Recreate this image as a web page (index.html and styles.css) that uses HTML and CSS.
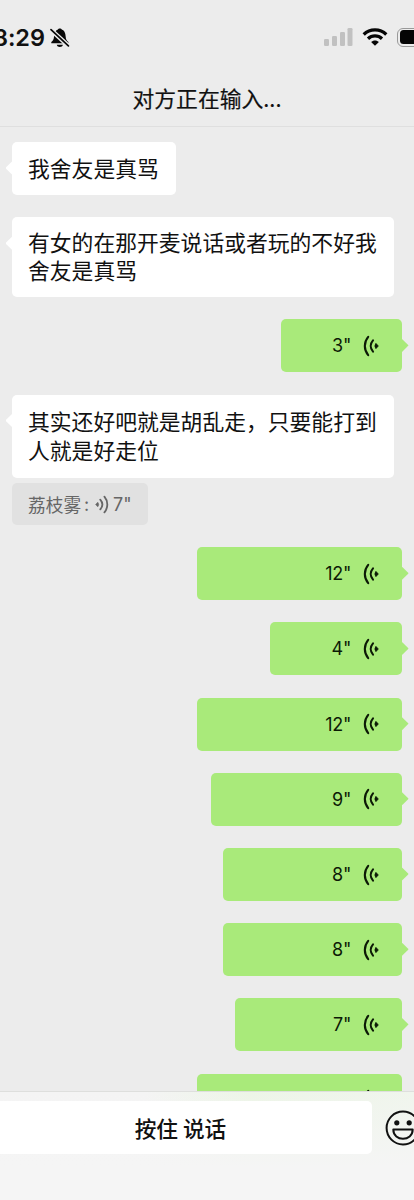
FILE: index.html
```html
<!DOCTYPE html>
<html lang="zh-CN">
<head>
<meta charset="utf-8">
<title>对方正在输入...</title>
<link rel="stylesheet" href="styles.css">
</head>
<body>
<svg width="0" height="0" class="defs">
  <symbol id="voice" viewBox="0 0 16 22">
    <path d="M5.2 1.9C.7 7.2.7 14.8 5.2 20.1M10 5.4c-3 3.4-3 7.8 0 11.2" fill="none" stroke="currentColor" stroke-width="2.1" stroke-linecap="round"/>
    <path d="M12.9 8.3 15.4 11l-2.5 2.7Q10.7 11 12.9 8.3Z" fill="currentColor" stroke="currentColor" stroke-width=".6" stroke-linejoin="round"/>
  </symbol>
</svg>
<div class="screen">
  <header class="header">
    <div class="status">
      <div class="status-left">
        <span class="time">8:29</span>
        <svg class="bell" width="20" height="20" viewBox="0 0 20 20">
          <path d="M1.3 15.2V14c1.8-1.5 2.5-2.7 2.7-5.3C4.300 4.500 5.800 2.100 8 1.500 8.300.2 11.300.2 11.700 1.500c2.300.7 3.800 3 4 7.200.1 2.600.9 3.800 2.700 5.300v1.200ZM6.800 16.800h6.100c-.4 3-5.700 3-6.100 0Z"/>
          <path class="bell-gap" d="M.5 1.500 18.700 18.200"/>
          <path class="bell-slash" d="M1 1.600 18.400 17.900"/>
        </svg>
      </div>
      <div class="status-right">
        <svg width="29" height="18" viewBox="0 0 29 18" fill="#c1c1c1"><rect y="11" width="5" height="7" rx="1.300"/><rect x="8" y="8" width="5" height="10" rx="1.300"/><rect x="16" y="4" width="5" height="14" rx="1.300"/><rect x="23.500" width="5" height="18" rx="1.300"/></svg>
        <svg class="wifi" width="26" height="18" viewBox="0 0 26 18"><path d="M1.700 6.500C8 .4 18 .4 24.300 6.500M6 10.700c4-3.700 10-3.700 14 0" fill="none" stroke="#050505" stroke-width="3.300"/><path d="M13 17.800 9.100 14.100c2-2.100 5.800-2.100 7.800 0Z" fill="#050505"/></svg>
        <div class="battery"><div class="battery-fill"></div></div>
      </div>
    </div>
    <h1 class="title">对方正在输入...</h1>
  </header>
  <main class="chat">
    <div class="bubble in one">我舍友是真骂</div>
    <div class="bubble in two tight">有女的在那开麦说话或者玩的不好我<br>舍友是真骂</div>
    <div class="bubble out s3"><span>3"</span><svg class="voice"><use href="#voice"/></svg></div>
    <div class="group">
      <div class="bubble in two loose">其实还好吧就是胡乱走，只要能打到<br>人就是好走位</div>
      <div class="quote"><span class="quote-name">荔枝雾</span><span class="colon">:</span><svg class="voice small"><use href="#voice"/></svg><span>7"</span></div>
    </div>
    <div class="bubble out s12"><span>12"</span><svg class="voice"><use href="#voice"/></svg></div>
    <div class="bubble out s4"><span>4"</span><svg class="voice"><use href="#voice"/></svg></div>
    <div class="bubble out s12"><span>12"</span><svg class="voice"><use href="#voice"/></svg></div>
    <div class="bubble out s9"><span>9"</span><svg class="voice"><use href="#voice"/></svg></div>
    <div class="bubble out s8"><span>8"</span><svg class="voice"><use href="#voice"/></svg></div>
    <div class="bubble out s8"><span>8"</span><svg class="voice"><use href="#voice"/></svg></div>
    <div class="bubble out s7"><span>7"</span><svg class="voice"><use href="#voice"/></svg></div>
    <div class="bubble out s12"><svg class="voice"><use href="#voice"/></svg></div>
  </main>
  <footer class="footer">
    <button class="talk">按住 说话</button>
    <svg class="smile" width="36" height="36" viewBox="0 0 36 36">
      <circle cx="18" cy="18" r="16.400" fill="none" stroke="#111" stroke-width="2"/>
      <circle cx="11.800" cy="12.800" r="2.600" fill="#111"/><circle cx="24.200" cy="12.800" r="2.600" fill="#111"/>
      <path d="M8.300 19.600h19.400c0 12.200-19.400 12.200-19.400 0Z" fill="none" stroke="#111" stroke-width="2" stroke-linejoin="round"/>
    </svg>
  </footer>
</div>
</body>
</html>
```
FILE: styles.css
```css
* { box-sizing: border-box; }
body {
  margin: 0;
  background: #ececec;
  color: #111;
  font-family: Inter, "Noto Sans CJK SC", sans-serif;
}
.defs { display: block; position: absolute; }
.screen {
  display: flex;
  flex-direction: column;
  width: 414px;
  height: 1200px;
  overflow: hidden;
}
.header {
  flex: none;
  height: 127px;
  padding-top: 22px;
  border-bottom: 1px solid #dfdfdf;
  background: #ececec;
}
.status {
  display: flex;
  justify-content: space-between;
  height: 32px;
}
.status-left, .status-right { display: flex; align-items: center; flex: none; }
.status-left { margin-left: -7px; }
.time {
  width: 52px;
  font-size: 23.5px;
  font-weight: 600;
  line-height: 32px;
  white-space: nowrap;
  letter-spacing: -0.1px;
}
.bell { margin-left: 5px; fill: #080808; }
.bell-gap { stroke: #ececec; stroke-width: 4.5; }
.bell-slash { stroke: #080808; stroke-width: 1.7; stroke-linecap: round; }
.status-right { margin-right: -19px; height: 30px; }
.wifi { margin-left: 9px; }
.battery {
  width: 36px;
  height: 19px;
  margin-left: 9px;
  padding: 1.5px;
  border: 1.5px solid #999;
  border-radius: 6px;
}
.battery-fill { height: 100%; border-radius: 3.5px; background: #050505; }
.title {
  margin: 28.5px 0 0;
  font-family: "Noto Sans CJK SC", sans-serif;
  font-size: 21.8px;
  font-weight: 400;
  line-height: 30px;
  text-align: center;
  -webkit-text-stroke: 0.2px #111;
}
.chat {
  flex: 1;
  min-height: 0;
  overflow: hidden;
  display: flex;
  flex-direction: column;
  align-items: flex-start;
  gap: 22.2px;
  padding: 15px 12px 0;
}
.bubble {
  position: relative;
  flex: none;
  border-radius: 5px;
}
.in {
  padding: 11px 16px;
  background: #fff;
  font-family: "Noto Sans CJK SC", sans-serif;
  font-size: 21.8px;
  line-height: 29px;
  white-space: nowrap;
}
.one { width: 164px; height: 53px; }
.two { width: 382px; }
.tight { height: 80px; line-height: 27.4px; }
.loose { height: 83px; line-height: 29.3px; }
.in::before, .out::after {
  content: "";
  position: absolute;
  top: 19px;
  width: 7px;
  height: 14px;
}
.in::before {
  left: -6.5px;
  background: #fff;
  clip-path: polygon(100% 0, 12% 43%, 0 50%, 12% 57%, 100% 100%);
}
.out {
  display: flex;
  align-items: center;
  justify-content: flex-end;
  gap: 11.5px;
  align-self: flex-end;
  height: 53px;
  padding-right: 23.5px;
  background: #a9ea7a;
  color: #0c1a06;
  font-size: 18px;
  letter-spacing: -0.3px;
}
.out::after {
  right: -6.5px;
  background: #a9ea7a;
  clip-path: polygon(0 0, 88% 43%, 100% 50%, 88% 57%, 0 100%);
}
.s3 { width: 121px; }
.s4 { width: 132.5px; }
.s7 { width: 167.5px; }
.s8 { width: 179.2px; }
.s9 { width: 191px; }
.s12 { width: 205.3px; }
.voice { display: block; width: 16px; height: 22px; flex: none; }
.group { display: flex; flex-direction: column; gap: 5.5px; }
.quote {
  display: flex;
  align-items: center;
  width: 136px;
  height: 42px;
  padding-left: 16px;
  border-radius: 5px;
  background: #e1e1e1;
  color: #666;
  font-size: 18px;
}
.quote-name {
  margin-top: -1px;
  font-family: "Noto Sans CJK SC", sans-serif;
  font-size: 17.7px;
}
.colon { width: 14px; padding-left: 3px; }
.small { width: 14px; height: 19px; margin-right: 4px; transform: scaleX(-1); }
.footer {
  flex: none;
  display: flex;
  height: 109px;
  padding-top: 9px;
  border-top: 1px solid #dedfdd;
  background: linear-gradient(180deg, #f5f5f500 0, #f5f5f5 75px), linear-gradient(90deg, #f4f4f4 35%, #edf5e7 60%, #f0f5ed);
}
.talk {
  flex: none;
  width: 380px;
  height: 53px;
  margin-left: -8px;
  padding: 0 3px 1px 0;
  border: 0;
  border-radius: 5px;
  background: #fff;
  color: #111;
  font-family: "Noto Sans CJK SC", sans-serif;
  font-size: 21.7px;
  font-weight: 500;
}
.smile { flex: none; margin: 8.5px 0 0 13px; }
```
